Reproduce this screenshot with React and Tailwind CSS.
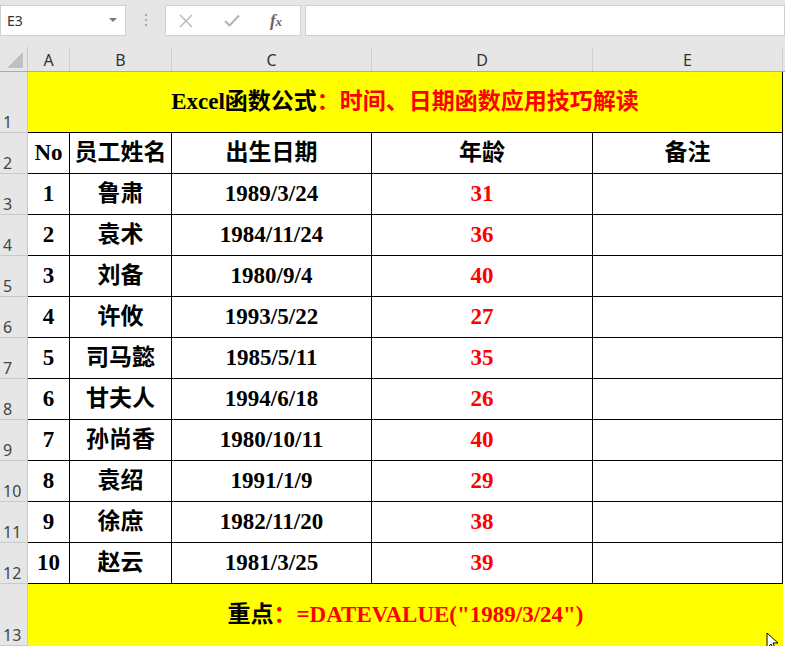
import React from 'react';

const rows = [
  ['1', '鲁肃', '1989/3/24', '31'],
  ['2', '袁术', '1984/11/24', '36'],
  ['3', '刘备', '1980/9/4', '40'],
  ['4', '许攸', '1993/5/22', '27'],
  ['5', '司马懿', '1985/5/11', '35'],
  ['6', '甘夫人', '1994/6/18', '26'],
  ['7', '孙尚香', '1980/10/11', '40'],
  ['8', '袁绍', '1991/1/9', '29'],
  ['9', '徐庶', '1982/11/20', '38'],
  ['10', '赵云', '1981/3/25', '39'],
];

const serif = { fontFamily: '"Liberation Serif", "Noto Sans CJK SC", serif' };
const ui = { fontFamily: '"Noto Sans", "Liberation Sans", "Noto Sans CJK SC", sans-serif' };

const RowHead = ({ n, h }) => (
  <div
    className={`w-[28px] shrink-0 bg-[#e6e6e6] border-b border-r border-[#c9c9c9] flex items-end pl-[3px] text-[16px] leading-[20px] font-normal text-[#444] ${h}`}
    style={ui}
  >
    {n}
  </div>
);

const Cell = ({ w, children, red }) => (
  <div
    className={`${w} shrink-0 h-full flex items-center justify-center border-b border-r border-black ${red ? 'text-[#ff0000]' : 'text-black'}`}
  >
    {children}
  </div>
);

export default function App() {
  return (
    <div className="w-[785px] h-[646px] overflow-hidden bg-white relative">
      {/* formula bar */}
      <div className="h-[47px] bg-[#e6e6e6] flex items-start pt-[5px]">
        <div className="w-[126px] h-[31px] bg-white border border-[#d0d0d0] flex items-center justify-between pl-[6px] pr-[8px] text-[14px] text-[#333]" style={ui}>
          <span>E3</span>
          <svg width="8" height="5" viewBox="0 0 8 5"><path d="M0 0h8L4 4z" fill="#777" /></svg>
        </div>
        <div className="w-[39px] h-[31px] flex items-center justify-center">
          <svg width="4" height="16" viewBox="0 0 4 16">
            <rect x="1" y="1" width="2" height="2" fill="#a8a8a8" />
            <rect x="1" y="6" width="2" height="2" fill="#a8a8a8" />
            <rect x="1" y="11" width="2" height="2" fill="#a8a8a8" />
          </svg>
        </div>
        <div className="w-[136px] h-[31px] bg-white border border-[#d0d0d0] flex items-center">
          <div className="w-[40px] flex justify-center">
            <svg width="14" height="14" viewBox="0 0 14 14"><path d="M1 1l12 12M13 1L1 13" stroke="#b4b4b4" strokeWidth="1.4" /></svg>
          </div>
          <div className="w-[52px] flex justify-center">
            <svg width="16" height="13" viewBox="0 0 16 13"><path d="M1 7l4.5 4.5L15 1.5" stroke="#b4b4b4" strokeWidth="2" fill="none" /></svg>
          </div>
          <div className="w-[36px] flex justify-center text-[17px] italic font-bold text-[#666]" style={serif}>
            <span>f<span className="text-[13px]">x</span></span>
          </div>
        </div>
        <div className="w-[4px]" />
        <div className="flex-1 h-[31px] bg-white border border-[#d0d0d0]" />
      </div>

      {/* column headers */}
      <div className="h-[25px] flex bg-[#e6e6e6] border-b border-[#ababab] text-[16px] leading-[20px] text-[#333]" style={ui}>
        <div className="w-[28px] shrink-0 relative border-r border-[#c9c9c9]">
          <svg className="absolute right-[4px] bottom-[3px]" width="16" height="16" viewBox="0 0 16 16"><path d="M16 0V16H0z" fill="#c0c0c0" /></svg>
        </div>
        <div className="w-[42px] shrink-0 flex items-end justify-center pb-[1px] border-r border-[#d0d0d0]">A</div>
        <div className="w-[102px] shrink-0 flex items-end justify-center pb-[1px] border-r border-[#d0d0d0]">B</div>
        <div className="w-[200px] shrink-0 flex items-end justify-center pb-[1px] border-r border-[#d0d0d0]">C</div>
        <div className="w-[221px] shrink-0 flex items-end justify-center pb-[1px] border-r border-[#d0d0d0]">D</div>
        <div className="w-[190px] shrink-0 flex items-end justify-center pb-[1px] border-r border-[#d0d0d0]">E</div>
      </div>

      <div className="font-bold text-[23px]" style={serif}>
        {/* row 1 title */}
        <div className="flex h-[61px]">
          <RowHead n="1" h="h-[61px]" />
          <div className="w-[755px] h-full bg-[#ffff00] border-b border-r border-black flex items-center justify-center">
            <span className="text-black">Excel函数公式</span>
            <span className="text-[#ff0000]">：时间、日期函数应用技巧解读</span>
          </div>
        </div>

        {/* row 2 header */}
        <div className="flex h-[41px]">
          <RowHead n="2" h="h-[41px]" />
          <Cell w="w-[42px]">No</Cell>
          <Cell w="w-[102px]">员工姓名</Cell>
          <Cell w="w-[200px]">出生日期</Cell>
          <Cell w="w-[221px]">年龄</Cell>
          <Cell w="w-[190px]">备注</Cell>
        </div>

        {rows.map((r, i) => (
          <div key={i} className="flex h-[41px]">
            <RowHead n={String(i + 3)} h="h-[41px]" />
            <Cell w="w-[42px]">{r[0]}</Cell>
            <Cell w="w-[102px]">{r[1]}</Cell>
            <Cell w="w-[200px]">{r[2]}</Cell>
            <Cell w="w-[221px]" red>{r[3]}</Cell>
            <Cell w="w-[190px]"></Cell>
          </div>
        ))}

        {/* row 13 */}
        <div className="flex h-[62px]">
          <RowHead n="13" h="h-[62px]" />
          <div className="w-[755px] h-full bg-[#ffff00] flex items-center justify-center">
            <span className="text-black">重点</span>
            <span className="text-[#ff0000]">：=DATEVALUE("1989/3/24")</span>
          </div>
        </div>
      </div>

      {/* mouse pointer */}
      <svg className="absolute left-[766px] top-[632px]" width="14" height="20" viewBox="0 0 14 20">
        <path d="M1 1v15l4-4 3 7 2-1-3-7h5z" fill="#fff" stroke="#000" strokeWidth="1" />
      </svg>
    </div>
  );
}
